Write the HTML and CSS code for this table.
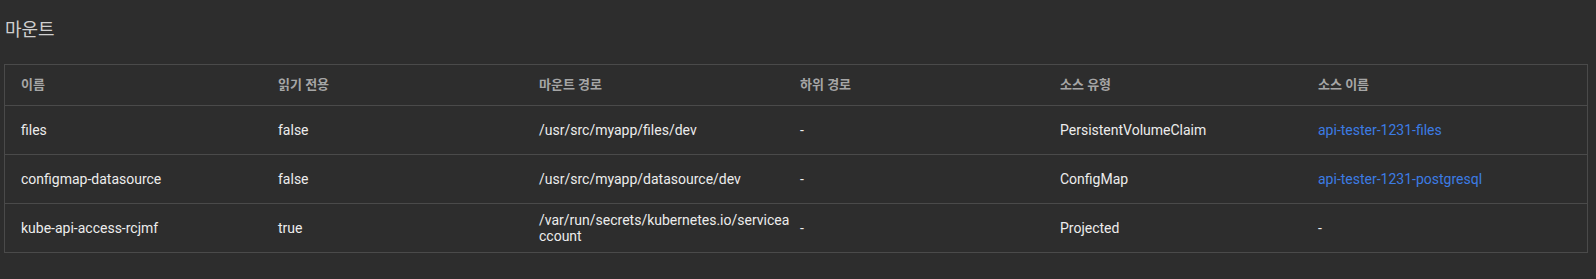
FILE: index.html
```html
<!DOCTYPE html>
<html lang="ko">
<head>
<meta charset="utf-8">
<title>마운트</title>
<link rel="stylesheet" href="styles.css">
</head>
<body>
<div class="page">
  <h2 class="title">마운트</h2>
  <div class="table">
    <div class="row head">
      <div class="cell">이름</div>
      <div class="cell">읽기 전용</div>
      <div class="cell">마운트 경로</div>
      <div class="cell">하위 경로</div>
      <div class="cell">소스 유형</div>
      <div class="cell">소스 이름</div>
    </div>
    <div class="row">
      <div class="cell">files</div>
      <div class="cell">false</div>
      <div class="cell">/usr/src/myapp/files/dev</div>
      <div class="cell">-</div>
      <div class="cell">PersistentVolumeClaim</div>
      <div class="cell"><a class="link" href="#">api-tester-1231-files</a></div>
    </div>
    <div class="row">
      <div class="cell">configmap-datasource</div>
      <div class="cell">false</div>
      <div class="cell">/usr/src/myapp/datasource/dev</div>
      <div class="cell">-</div>
      <div class="cell">ConfigMap</div>
      <div class="cell"><a class="link" href="#">api-tester-1231-postgresql</a></div>
    </div>
    <div class="row last">
      <div class="cell">kube-api-access-rcjmf</div>
      <div class="cell">true</div>
      <div class="cell">/var/run/secrets/kubernetes.io/serviceaccount</div>
      <div class="cell">-</div>
      <div class="cell">Projected</div>
      <div class="cell">-</div>
    </div>
  </div>
</div>
</body>
</html>
```

FILE: styles.css
```css
html, body {
  margin: 0;
  padding: 0;
  background: #2d2d2d;
}
body {
  font-family: Roboto, "Noto Sans CJK KR", sans-serif;
  color: #ececec;
  width: 1596px;
  height: 279px;
  overflow: hidden;
}
.page {
  padding: 18px 0 0 4px;
}
.title {
  margin: 0 0 22px 1px;
  font-size: 18px;
  line-height: 24px;
  font-weight: 400;
  color: #cfcfcf;
}
.table {
  width: 1584px;
  box-sizing: border-box;
  border: 1px solid #4a4a4a;
}
.row {
  display: grid;
  grid-template-columns: 273px 261px 261px 260px 258px 1fr;
  align-items: center;
  height: 48px;
  border-bottom: 1px solid #4a4a4a;
  font-size: 14px;
  line-height: 16.5px;
}
.row.last {
  border-bottom: 0;
}
.row.head {
  height: 40px;
  font-size: 13px;
  font-weight: 700;
  color: #a6a6a6;
}
.cell {
  padding-right: 8px;
  word-break: break-all;
}
.cell:first-child {
  padding-left: 16px;
}
.link {
  color: #3c7ce4;
  text-decoration: none;
}
```
